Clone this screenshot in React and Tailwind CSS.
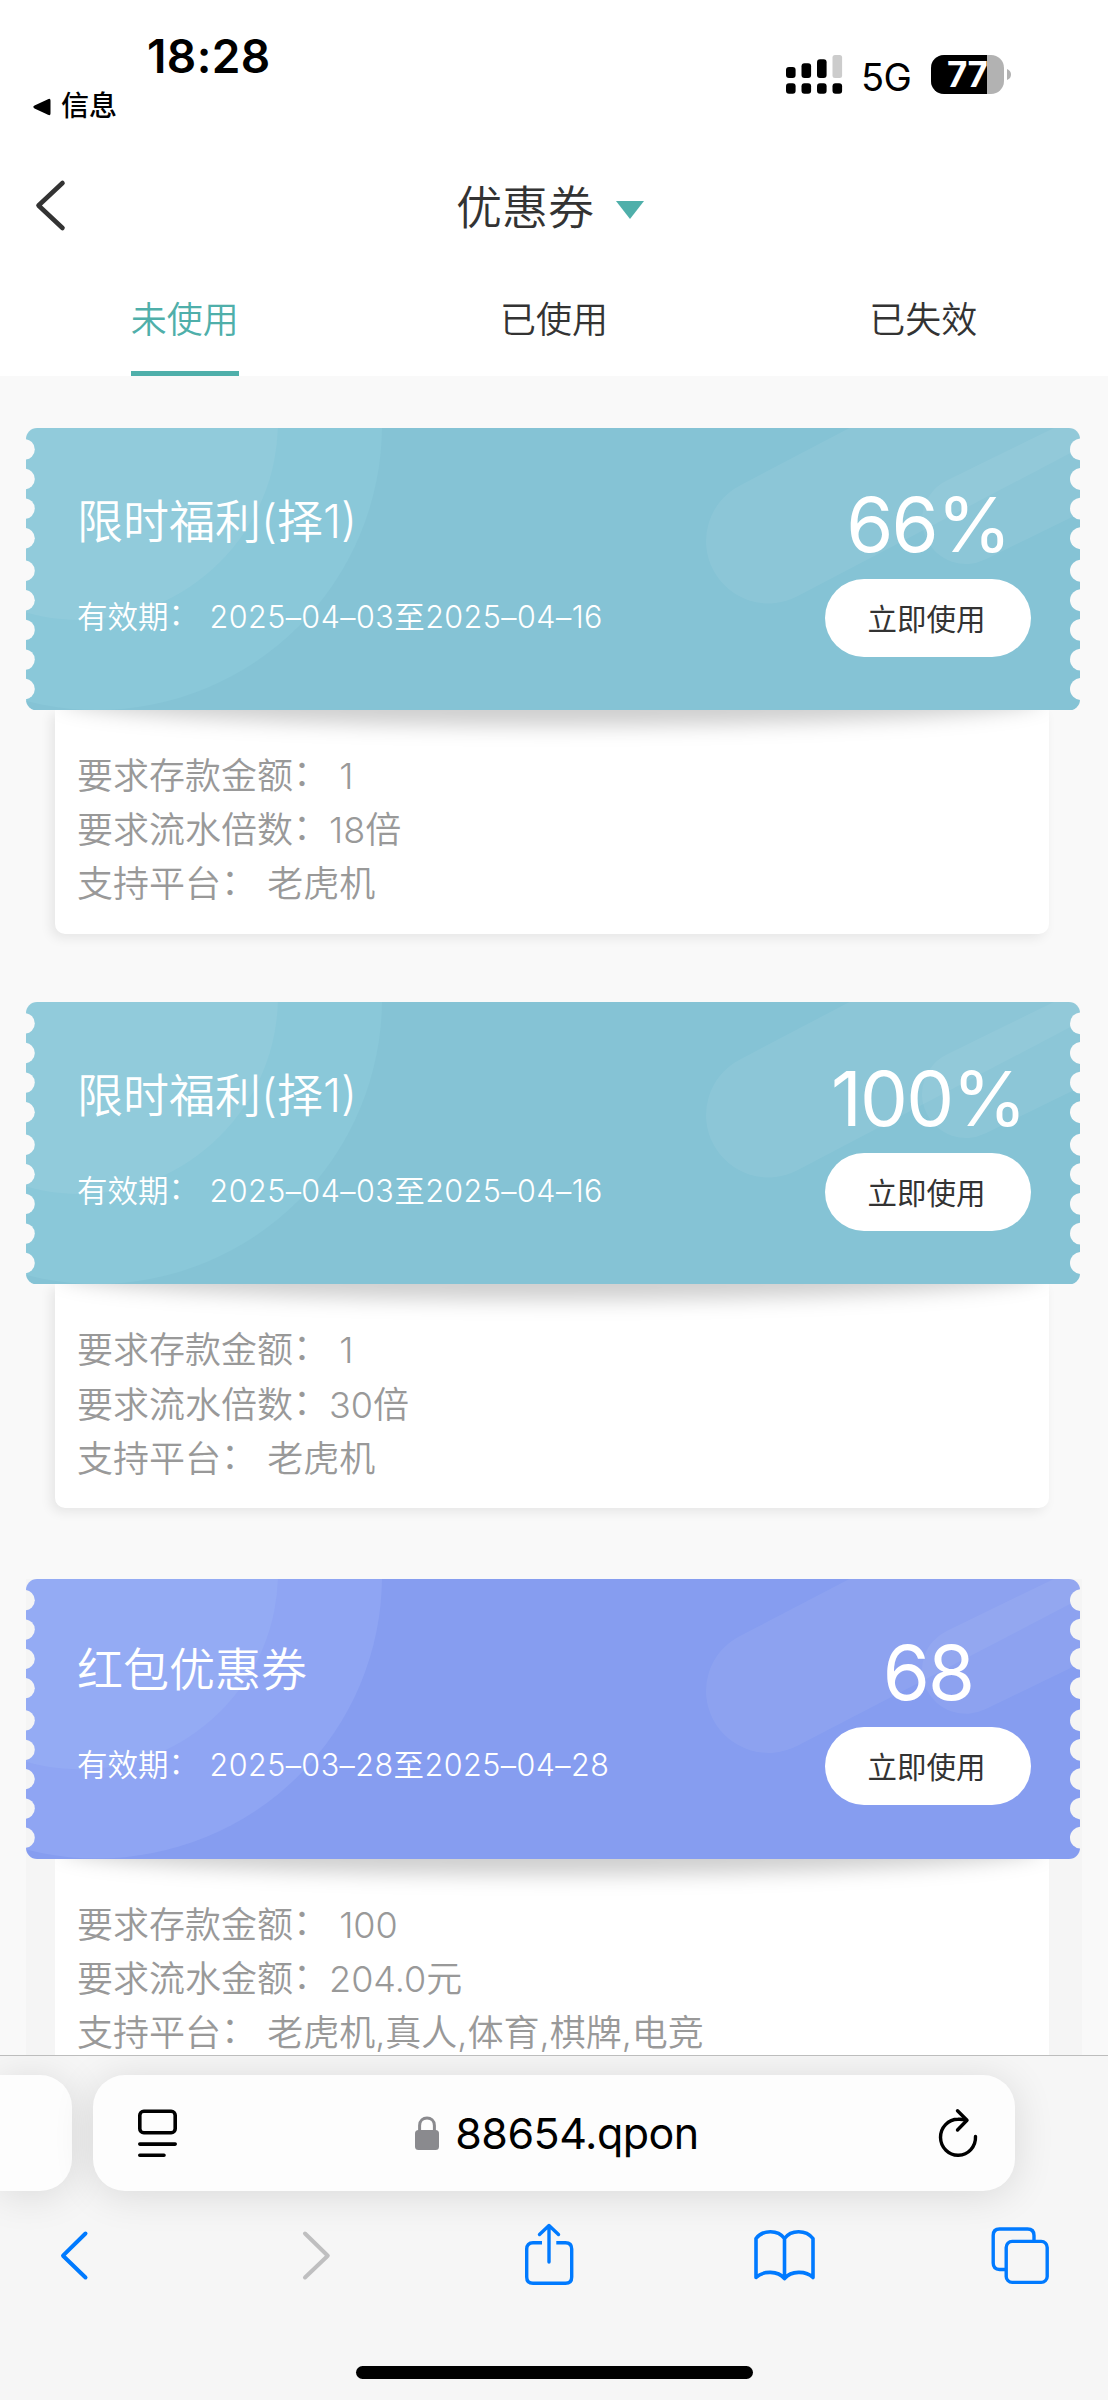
const coupons = [
    {
        id: 1,
        title: '限时福利(择1)',
        value: '66%',
        period: '2025–04–03至2025–04–16',
        theme: 'teal',
        rows: [['要求存款金额', ' 1'], ['要求流水倍数', '18倍'], ['支持平台', ' 老虎机']],
    },
    {
        id: 2,
        title: '限时福利(择1)',
        value: '100%',
        period: '2025–04–03至2025–04–16',
        theme: 'teal',
        rows: [['要求存款金额', ' 1'], ['要求流水倍数', '30倍'], ['支持平台', ' 老虎机']],
    },
    {
        id: 3,
        title: '红包优惠券',
        value: '68',
        period: '2025–03–28至2025–04–28',
        theme: 'purple',
        rows: [['要求存款金额', ' 100'], ['要求流水金额', '204.0元'], ['支持平台', ' 老虎机,真人,体育,棋牌,电竞']],
    },
];

const tabs = ['未使用', '已使用', '已失效'];

const notches = [21.4, 51, 80.6, 110.2, 142.7, 172.3, 201.9, 231.6, 261];

const themes = {
    teal: { base: '#85c3d5', outer: '#8ac8d9', inner: '#91cbdb' },
    purple: { base: '#869df0', outer: '#8fa5f3', inner: '#94abf4' },
};

const StatusBar = () => (
    <div className="h-[136px] flex justify-between">
        <div className="pl-8">
            <div className="h-[80px] pt-[30px] pl-[115px] text-[46px] leading-[52px] font-semibold tracking-[0.4px] text-black">18:28</div>
            <div className="flex items-center gap-[10px] text-[28px] leading-[53px] font-medium text-black">
                <svg width="19" height="18" viewBox="0 0 19 18">
                    <path d="M2.5 7.6 16 1.2Q18.5 0 18.5 2.5V15.5Q18.5 18 16 16.8L2.5 10.4Q0 9 2.5 7.6Z" />
                </svg>
                <span>信息</span>
            </div>
        </div>
        <div className="flex pt-[55px] pr-[97px] h-[94px]">
            <svg width="57" height="39" viewBox="0 0 57 39">
                <rect x="0" y="12" width="9.6" height="11" rx="3" />
                <rect x="15.5" y="8.3" width="9.6" height="14.7" rx="3" />
                <rect x="31" y="4.3" width="9.6" height="18.7" rx="3" />
                <rect x="46.5" y="0" width="9.6" height="23" rx="2.5" fill="#cccccc" />
                <rect x="0" y="28.3" width="9.6" height="10.4" rx="3" />
                <rect x="15.5" y="28.3" width="9.6" height="10.4" rx="3" />
                <rect x="31" y="28.3" width="9.6" height="10.4" rx="3" />
                <rect x="46.5" y="28.3" width="9.6" height="10.4" rx="3" />
            </svg>
            <span className="ml-[18px] w-[70px] text-[38px] leading-[44px] tracking-[-0.5px] text-black">5G</span>
            <div className="w-[73px] h-[39px] rounded-[13px] bg-[#b2b2b2]">
                <div className="w-[56px] h-[39px] pl-[16px] rounded-l-[13px] bg-black text-[35px] leading-[39px] font-bold text-white tracking-[-0.5px]">77</div>
            </div>
            <svg className="ml-[3px] mt-[14px]" width="4" height="11" viewBox="0 0 4 11">
                <path d="M0 0Q4 1.5 4 5.5T0 11Z" fill="#b2b2b2" />
            </svg>
        </div>
    </div>
);

const Header = () => (
    <header className="h-[136px] flex items-center justify-between px-[32px]">
        <svg width="40" height="56" viewBox="0 0 40 56" fill="none" stroke="#333" strokeWidth="4.6" strokeLinecap="round" strokeLinejoin="round">
            <path d="M30.5 7 6.5 29.5 30.5 52" />
        </svg>
        <div className="flex items-center gap-[22px] pt-[6px] pr-[8px] text-[46px] leading-[60px] text-[#333]">
            <h1 className="font-[350]">优惠券</h1>
            <svg className="mt-[5px]" width="28" height="18" viewBox="0 0 28 18">
                <path d="M0 0H28L14 18Z" fill="#4fafaa" />
            </svg>
        </div>
        <div className="w-[40px]" />
    </header>
);

const CouponArt = ({ theme, id }) => {
    const c = themes[theme];
    const maskId = `coupon-mask-${id}`;
    return (
        <svg className="block w-[1054px] h-full" viewBox="0 0 1054 282.5" preserveAspectRatio="none">
            <defs>
                <mask id={maskId}>
                    <rect width="1054" height="282.5" rx="11" fill="#fff" />
                    {notches.map((y) => (
                        <g key={y}>
                            <circle cx="-1.5" cy={y} r="10.3" fill="#000" />
                            <circle cx="1055" cy={y} r="11" fill="#000" />
                        </g>
                    ))}
                </mask>
            </defs>
            <g mask={`url(#${maskId})`}>
                <rect width="1054" height="282.5" fill={c.base} />
                <circle cx="71" cy="-3" r="285" fill={c.outer} />
                <circle cx="54" cy="-6" r="198" fill={c.inner} />
                <g stroke="#fff" strokeLinecap="round">
                    <path d="M742.5 113 1142.5 -97" strokeWidth="125" strokeOpacity=".06" />
                    <path d="M940 92 1340 -104" strokeWidth="88" strokeOpacity=".06" />
                </g>
            </g>
        </svg>
    );
};

// Curved shadow the ticket drops on its detail panel
const CouponShadow = () => (
    <svg className="absolute left-0 top-0 z-[1]" width="994" height="60" viewBox="0 0 994 60">
        <defs>
            <filter id="soft" x="-10%" y="-80%" width="120%" height="260%">
                <feGaussianBlur stdDeviation="10" />
            </filter>
        </defs>
        <ellipse cx="497" cy="-11" rx="492" ry="27" fill="#000" fillOpacity=".19" filter="url(#soft)" />
    </svg>
);

const Colon = () => <span lang="zh-CN" className="relative -top-[0.08em] font-['Noto_Sans_CJK_SC',sans-serif] leading-none">：</span>;

const CouponCard = ({ coupon }) => {
    const isPurple = coupon.theme === 'purple';
    return (
        <article className={`relative mb-[67.8px] ${isPurple ? 'w-[1056px] bg-[linear-gradient(#f5f5f5,#f5f5f5)] bg-no-repeat bg-[position:0_3px]' : ''}`}>
            <div className="relative z-10 w-[1054px] h-[282.5px]">
                {/* Ticket background */}
                <div className={`absolute inset-x-0 bottom-0 ${isPurple ? 'h-[280px]' : 'h-[282.5px]'}`}>
                    <CouponArt theme={coupon.theme} id={coupon.id} />
                </div>
                <div className="relative flex justify-between h-full pl-[51px] pr-[49px] text-white">
                    <div className="pt-[63px]">
                        <h2 className="text-[46px] leading-[60px] font-[350]">{coupon.title}</h2>
                        <p className="mt-[46px] text-[30.5px] leading-[40px] font-[350] whitespace-pre">
                            有效期<Colon /><span className="pl-[10.5px] tracking-[0.45px]">{coupon.period}</span>
                        </p>
                    </div>
                    <div className="w-[206px] pt-[55px] flex flex-col items-center">
                        <span className="text-[76px] leading-[82px] font-normal tracking-[-1.8px]">{coupon.value}</span>
                        <button className="mt-[14px] w-[206px] h-[78px] pt-[3px] pr-[3px] rounded-full bg-white text-[29.5px] text-[#333]">立即使用</button>
                    </div>
                </div>
            </div>
            <div className={`relative ml-[29px] w-[994px] bg-white ${isPurple ? 'h-[260px]' : 'h-[224px] rounded-b-[10px] shadow-[-4px_4px_12px_rgba(0,0,0,0.08)]'}`}>
                <CouponShadow />
                <ul className="relative z-[2] pt-[39px] pl-[22px] text-[36px] leading-[54.2px] font-[350] text-[#999] whitespace-pre">
                    {coupon.rows.map(([label, value]) => (
                        <li key={label}>{label}<Colon />{value}</li>
                    ))}
                </ul>
            </div>
        </article>
    );
};

const AddressBar = () => (
    <div className="flex gap-[21px] pt-[19px]">
        <div className="w-[72px] h-[116px] rounded-r-[32px] bg-[#fdfdfd] shadow-[0_4px_40px_rgba(0,0,0,0.12)]" />
        <div className="w-[922px] h-[116px] rounded-[32px] bg-[#fdfdfd] shadow-[0_4px_40px_rgba(0,0,0,0.12)] flex items-center justify-between pl-[45px] pr-[36px]">
            <svg width="39" height="50" viewBox="0 0 39 50" fill="none" stroke="#000" strokeWidth="3.6" strokeLinecap="round">
                <rect x="1.8" y="3.3" width="35.4" height="21.4" rx="4" />
                <path d="M1.8 36.1H37.2M1.8 47.2H26" />
            </svg>
            <div className="flex items-center gap-[16px] text-[43px] text-black">
                <svg width="24" height="34" viewBox="0 0 24 34">
                    <rect x="0" y="14" width="24" height="20" rx="3.5" fill="#8a8a8e" />
                    <path d="M4.6 16V9.5C4.6 -.5 19.4 -.5 19.4 9.5V16" fill="none" stroke="#8a8a8e" strokeWidth="3" />
                </svg>
                <span className="pt-[1px] tracking-[-0.5px]">88654.qpon</span>
            </div>
            <svg width="42" height="50" viewBox="0 0 42 50" fill="none" stroke="#000" strokeWidth="3.4" strokeLinecap="round" strokeLinejoin="round">
                <path d="M38.5 28.5A17.5 18 0 1 1 21 11.3Q25 11 29.5 12.3" />
                <path d="M20.5 2.7 30 12.3 20.5 22" />
            </svg>
        </div>
    </div>
);

const Toolbar = () => (
    <nav className="mt-[31px] pl-[44px] pr-[56px] flex justify-between">
        <svg width="64" height="66" viewBox="0 0 64 66" fill="none" stroke="#007aff" strokeWidth="4" strokeLinecap="round" strokeLinejoin="round">
            <path d="M41.5 11.5 19 33.7 41.5 55.5" />
        </svg>
        <svg width="64" height="66" viewBox="0 0 64 66" fill="none" stroke="#bfbfc0" strokeWidth="4" strokeLinecap="round" strokeLinejoin="round">
            <path d="M25 11.5 47.8 33.7 25 55.5" />
        </svg>
        <svg width="64" height="66" viewBox="0 0 64 66" fill="none" stroke="#007aff" strokeWidth="3.4" strokeLinejoin="round">
            <path d="M26 20.8H17Q10.7 20.8 10.7 27V55Q10.7 61.3 17 61.3H49.5Q55.7 61.3 55.7 55V27Q55.7 20.8 49.5 20.8H40.3" />
            <path d="M33 40V3.5M23.5 12.5 33 3.5 42.5 12.5" strokeLinecap="round" />
        </svg>
        <svg width="64" height="66" viewBox="0 0 64 66" fill="none" stroke="#007aff" strokeWidth="3.6" strokeLinecap="round" strokeLinejoin="round">
            <path d="M32.5 16.5C26 7.5 11 7.5 4 16.5V55.5C11 48.5 26 48.5 32.5 56.5C39 48.5 54 48.5 61 55.5V16.5C54 7.5 39 7.5 32.5 16.5V56" />
        </svg>
        <svg width="64" height="66" viewBox="0 0 64 66" fill="none" stroke="#007aff" strokeWidth="3.4">
            <path d="M18 47.5H11.5Q5.2 47.5 5.2 41V13.5Q5.2 7 11.5 7H39.5Q46 7 46 13.5V18" />
            <rect x="18.2" y="19.4" width="41" height="41" rx="6" />
        </svg>
    </nav>
);

const App = () => (
    <div lang="zh-CN" className="w-[1108px] h-[2400px] overflow-hidden flex flex-col bg-[#f9f9f9] font-['Inter','Noto_Sans_CJK_SC',sans-serif]">
        <div className="h-[376px] shrink-0 bg-white">
            <StatusBar />
            <Header />
            <div className="grid grid-cols-3 h-[104px] text-[36px] leading-[97px] font-[350] text-[#333]">
                {tabs.map((tab, index) => (
                    <div key={tab} className="flex justify-center">
                        <span className={index === 0 ? 'h-[104px] border-b-[5px] border-[#4fafaa] text-[#4fafaa]' : ''}>{tab}</span>
                    </div>
                ))}
            </div>
        </div>

        <main className="h-[1679px] shrink-0 overflow-hidden pt-[51.5px] pl-[26px]">
            {coupons.map((coupon) => (
                <CouponCard key={coupon.id} coupon={coupon} />
            ))}
        </main>

        <footer className="h-[345px] shrink-0 overflow-hidden border-t border-[#bdbdbd] bg-[#f6f6f6]">
            <AddressBar />
            <Toolbar />
            <div className="mt-[78px] mx-auto w-[397px] h-[13px] rounded-full bg-black" />
        </footer>
    </div>
);

export default App;
